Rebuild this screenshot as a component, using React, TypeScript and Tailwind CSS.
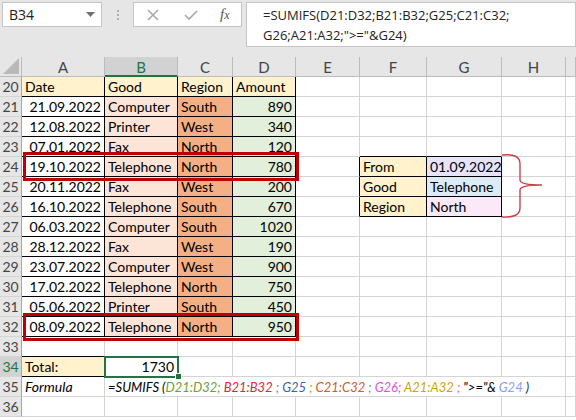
import React from "react";

const COLS = [
  "w-[22px]",
  "w-[83px]",
  "w-[73px]",
  "w-[55px]",
  "w-[63px]",
  "w-[64px]",
  "w-[67px]",
  "w-[75px]",
  "w-[64px]",
  "w-[10px]",
];

const LETTERS = ["A", "B", "C", "D", "E", "F", "G", "H", ""];

const DATA: [string, string, string, string][] = [
  ["21.09.2022", "Computer", "South", "890"],
  ["12.08.2022", "Printer", "West", "340"],
  ["07.01.2022", "Fax", "North", "120"],
  ["19.10.2022", "Telephone", "North", "780"],
  ["20.11.2022", "Fax", "West", "200"],
  ["16.10.2022", "Telephone", "South", "670"],
  ["06.03.2022", "Computer", "South", "1020"],
  ["28.12.2022", "Fax", "West", "190"],
  ["23.07.2022", "Computer", "West", "900"],
  ["17.02.2022", "Telephone", "North", "750"],
  ["05.06.2022", "Printer", "South", "450"],
  ["08.09.2022", "Telephone", "North", "950"],
];

const FORMULA: [string, string][] = [
  ["=SUMIFS (", "text-black"],
  ["D21:D32;", "text-[#6f9d37]"],
  [" B21:B32", "text-[#e3262e]"],
  [" ; ", "text-[#4a90d9]"],
  ["G25", "text-[#3a5fb5]"],
  [" ; ", "text-[#a9a32a]"],
  ["C21:C32", "text-[#d65a1e]"],
  [" ; ", "text-[#6fa53a]"],
  ["G26;", "text-[#e44fe4]"],
  [" A21:A32", "text-[#cfa600]"],
  [" ; ", "text-[#e65fc8]"],
  ['">="&', "text-black"],
  [" G24", "text-[#8c9cf5]"],
  [" )", "text-[#1f2a6a]"],
];

type CellSpec = {
  text?: React.ReactNode;
  cls?: string;
  rb?: string;
  bb?: string;
};

const GRID_R = "border-r-[#d4d4d4]";
const GRID_B = "border-b-[#d4d4d4]";
const BLACK_R = "border-r-black";
const BLACK_B = "border-b-black";

function Cell({ w, spec }: { w: string; spec: CellSpec }) {
  return (
    <div
      className={`${w} h-full shrink-0 border-r border-b px-[3px] whitespace-nowrap overflow-hidden leading-[20px] ${spec.rb ?? GRID_R} ${spec.bb ?? GRID_B} ${spec.cls ?? "bg-white"}`}
    >
      {spec.text}
    </div>
  );
}

function buildRow(n: number): CellSpec[] {
  const cells: CellSpec[] = Array.from({ length: 9 }, () => ({}));

  if (n === 20) {
    ["Date", "Good", "Region", "Amount"].forEach((t, i) => {
      cells[i] = { text: t, cls: "bg-[#fff2cc]", rb: BLACK_R, bb: BLACK_B };
    });
  }

  if (n >= 21 && n <= 32) {
    const [d, g, r, a] = DATA[n - 21];
    cells[0] = { text: d, cls: "bg-white text-right", rb: BLACK_R, bb: BLACK_B };
    cells[1] = { text: g, cls: "bg-[#fce4d6]", rb: BLACK_R, bb: BLACK_B };
    cells[2] = { text: r, cls: "bg-[#f4b084]", rb: BLACK_R, bb: BLACK_B };
    cells[3] = { text: a, cls: "bg-[#e2efda] text-right", rb: BLACK_R, bb: BLACK_B };
  }

  if (n === 23) {
    cells[5] = { bb: BLACK_B };
    cells[6] = { bb: BLACK_B };
  }

  if (n >= 24 && n <= 26) {
    const labels = ["From", "Good", "Region"];
    const values = ["01.09.2022", "Telephone", "North"];
    const bgs = ["bg-[#e6e3fb]", "bg-[#ddebf7]", "bg-[#fbe8f8]"];
    cells[4] = { rb: BLACK_R };
    cells[5] = { text: labels[n - 24], cls: "bg-[#fff2cc]", rb: BLACK_R, bb: BLACK_B };
    cells[6] = { text: values[n - 24], cls: bgs[n - 24], rb: BLACK_R, bb: BLACK_B };
  }

  if (n === 33) {
    cells[0] = { bb: BLACK_B };
  }

  if (n === 34) {
    cells[0] = { text: "Total:", cls: "bg-[#fff2cc]", rb: BLACK_R, bb: BLACK_B };
    cells[1] = { text: "1730", cls: "bg-white text-right" };
  }

  return cells;
}

function FormulaRow() {
  return (
    <div className="flex h-[20px]">
      <div className="w-[22px] h-full shrink-0 border-r border-b border-r-[#a6a6a6] border-b-[#d4d4d4] bg-[#e6e6e6] text-center leading-[20px] text-[#444]">
        35
      </div>
      <div className="w-[83px] h-full shrink-0 border-r border-b border-r-[#d4d4d4] border-b-[#d4d4d4] px-[3px] italic leading-[20px] bg-white">
        Formula
      </div>
      <div className="w-[461px] h-full shrink-0 border-r border-b border-r-[#d4d4d4] border-b-[#d4d4d4] px-[3px] italic text-[13px] leading-[20px] whitespace-pre bg-white">
        {FORMULA.map(([t, c], i) => (
          <span key={i} className={c}>
            {t}
          </span>
        ))}
      </div>
      <Cell w={COLS[9]} spec={{}} />
    </div>
  );
}

function FormulaBar() {
  return (
    <div className="h-[57px] bg-[#e6e6e6] flex items-start pt-[2px] font-['Open_Sans',sans-serif] text-[13px] text-[#222]">
      <div className="ml-[2px] w-[100px] h-[25px] bg-white border border-[#c6c6c6] flex items-center justify-between pl-[6px] pr-[6px] text-[14px]">
        <span>B34</span>
        <svg width="9" height="5" viewBox="0 0 9 5">
          <path d="M0 0 L9 0 L4.5 5 Z" fill="#707070" />
        </svg>
      </div>
      <div className="w-[31px] h-[25px] flex flex-col items-center justify-center gap-[2px]">
        <span className="w-[2px] h-[2px] bg-[#b0b0b0]" />
        <span className="w-[2px] h-[2px] bg-[#b0b0b0]" />
        <span className="w-[2px] h-[2px] bg-[#b0b0b0]" />
      </div>
      <div className="w-[109px] h-[25px] bg-white border border-[#c6c6c6] flex items-center pl-[13px]">
        <svg width="12" height="12" viewBox="0 0 12 12">
          <path d="M1 1 L11 11 M11 1 L1 11" stroke="#a8a8a8" strokeWidth="1.6" />
        </svg>
        <svg width="14" height="12" viewBox="0 0 14 12" className="ml-[25px]">
          <path d="M1 6 L5 10 L13 2" stroke="#a8a8a8" strokeWidth="1.6" fill="none" />
        </svg>
        <span className="ml-[22px] font-['Liberation_Serif',serif] italic text-[15px] text-[#555] leading-none">
          f<span className="text-[12px]">x</span>
        </span>
      </div>
      <div className="ml-[4px] flex-1 h-[45px] bg-white border border-[#c6c6c6] pl-[16px] pt-[2px] leading-[20px]">
        <div>=SUMIFS(D21:D32;B21:B32;G25;C21:C32;</div>
        <div>G26;A21:A32;"&gt;="&amp;G24)</div>
      </div>
    </div>
  );
}

function HeaderRow() {
  return (
    <div className="flex h-[20px] text-[#444] text-[15px]">
      <div className="w-[22px] h-full shrink-0 border-r border-b border-r-[#bcbcbc] border-b-[#bcbcbc] bg-[#e6e6e6] relative">
        <svg width="16" height="16" viewBox="0 0 16 16" className="absolute right-[2px] bottom-[2px]">
          <path d="M16 0 L16 16 L0 16 Z" fill="#b9b9b9" />
        </svg>
      </div>
      {LETTERS.map((l, i) =>
        l === "B" ? (
          <div
            key={i}
            className={`${COLS[i + 1]} h-full shrink-0 border-r border-r-[#bcbcbc] border-b-2 border-b-[#217346] bg-[#d2d2d2] text-center leading-[20px] text-[#217346]`}
          >
            {l}
          </div>
        ) : (
          <div
            key={i}
            className={`${COLS[i + 1]} h-full shrink-0 border-r border-b border-r-[#bcbcbc] border-b-[#bcbcbc] bg-[#e6e6e6] text-center leading-[20px]`}
          >
            {l}
          </div>
        )
      )}
    </div>
  );
}

export default function App() {
  const rows = Array.from({ length: 17 }, (_, i) => 20 + i);

  return (
    <div className="relative w-[576px] h-[420px] overflow-hidden bg-white">
      <FormulaBar />
      <div className="font-[Lato,sans-serif] text-[14px] text-black">
        <HeaderRow />
        {rows.map((n) =>
          n === 35 ? (
            <FormulaRow key={n} />
          ) : (
            <div key={n} className="flex h-[20px]">
              <div
                className={`w-[22px] h-full shrink-0 border-r border-b border-r-[#a6a6a6] border-b-[#d4d4d4] text-center leading-[20px] ${
                  n === 34 ? "bg-[#d2d2d2] text-[#217346]" : "bg-[#e6e6e6] text-[#444]"
                }`}
              >
                {n}
              </div>
              {buildRow(n).map((spec, i) => (
                <Cell key={i} w={COLS[i + 1]} spec={spec} />
              ))}
            </div>
          )
        )}
      </div>

      {/* highlighted matches */}
      <div className="absolute left-[23px] top-[152px] w-[276px] h-[29px] border-[3px] border-[#c00000]" />
      <div className="absolute left-[23px] top-[313px] w-[276px] h-[28px] border-[3px] border-[#c00000]" />

      {/* criteria brace */}
      <svg
        width="46"
        height="72"
        viewBox="0 0 46 72"
        className="absolute left-[500px] top-[150px]"
      >
        <path
          d="M2 5 Q20 3 20 14 L20 30 Q20 35 42 35 Q20 35 20 40 L20 58 Q20 68 2 67"
          stroke="#c9424a"
          strokeWidth="1.4"
          fill="none"
        />
      </svg>

      {/* active cell B34 */}
      <div className="absolute left-[104px] top-[356px] w-[75px] h-[22px] border-2 border-[#217346]" />
      <div className="absolute left-[175px] top-[373px] w-[7px] h-[7px] bg-[#217346] border border-white" />
    </div>
  );
}
